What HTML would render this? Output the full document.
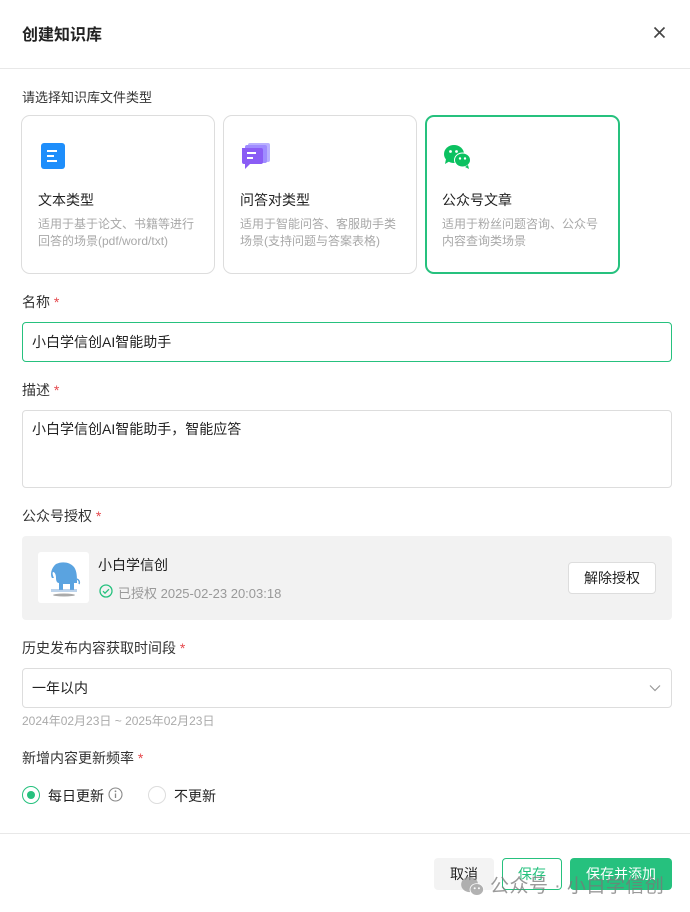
<!DOCTYPE html>
<html><head><meta charset="utf-8"><style>
*{box-sizing:border-box;margin:0;padding:0}
body{width:690px;height:912px;background:#fff;font-family:"Liberation Sans","Noto Sans CJK SC",sans-serif;color:#222;position:relative;overflow:hidden;font-size:14px}
.a{position:absolute;white-space:nowrap}
.lbl{font-size:14px;color:#333}
.lbl b{color:#e5484d;font-weight:normal}
.card{position:absolute;top:115px;height:159px;border:1px solid #ddd;border-radius:9px}
.card .t{position:absolute;left:16px;top:74px;font-size:14px;color:#222}
.card .d{position:absolute;left:16px;top:100px;font-size:12px;line-height:17px;color:#a8a8a8;white-space:normal;width:165px}
.inp{position:absolute;left:22px;width:650px;border:1px solid #ddd;border-radius:4px;font-size:14px;padding-left:9px;color:#222}
.btn{position:absolute;top:858px;height:32px;border-radius:4px;font-size:14px;text-align:center;line-height:32px}
</style></head><body>
<div class="a" style="left:22px;top:21px;font-size:16px;font-weight:bold;color:#222">创建知识库</div>
<svg class="a" style="left:653px;top:26px" width="13" height="13" viewBox="0 0 13 13"><path d="M1.5 1.5L11.5 11.5M11.5 1.5L1.5 11.5" stroke="#444" stroke-width="1.6"/></svg>
<div class="a" style="left:0;top:68px;width:690px;height:1px;background:#e8e8e8"></div>
<div class="a lbl" style="left:22px;top:87px;font-size:13px">请选择知识库文件类型</div>

<div class="card" style="left:21px;width:194px">
<svg class="a" style="left:19px;top:27px" width="24" height="26" viewBox="0 0 24 26"><rect x="0" y="0" width="24" height="26" rx="3" fill="#1e8efb"/><path d="M6 8h10M6 13h7M6 18h10" stroke="#fff" stroke-width="2"/></svg>
<div class="t">文本类型</div><div class="d">适用于基于论文、书籍等进行回答的场景(pdf/word/txt)</div></div>
<div class="card" style="left:223px;width:194px">
<svg class="a" style="left:17px;top:27px" width="30" height="26" viewBox="0 0 30 26"><rect x="7" y="0" width="22" height="19" rx="2" fill="#b9b0ff"/><rect x="4" y="2" width="22" height="18" rx="2" fill="#9f8cff"/><path d="M1 5h19a2 2 0 0 1 2 2v12a2 2 0 0 1-2 2H9l-5 5v-5H3a2 2 0 0 1-2-2z" fill="#8a5cf5"/><path d="M6 10h9M6 15h6" stroke="#fff" stroke-width="2"/></svg>
<div class="t">问答对类型</div><div class="d">适用于智能问答、客服助手类场景(支持问题与答案表格)</div></div>
<div class="card" style="left:425px;width:195px;border:2px solid #26c17e">
<svg class="a" style="left:16px;top:27px" width="30" height="26" viewBox="0 0 30 26"><ellipse cx="11" cy="10" rx="10" ry="9" fill="#0bc160"/><path d="M3 15l-1 5 5-3z" fill="#0bc160"/><ellipse cx="19.5" cy="16" rx="8.5" ry="7.5" fill="#fff"/><ellipse cx="19.5" cy="16" rx="7.5" ry="6.5" fill="#0bc160"/><path d="M25 21l1 4-4-2z" fill="#0bc160"/><circle cx="7.5" cy="7.5" r="1.4" fill="#fff"/><circle cx="13.5" cy="7.5" r="1.4" fill="#fff"/><circle cx="17" cy="14.5" r="1.2" fill="#fff"/><circle cx="22" cy="14.5" r="1.2" fill="#fff"/></svg>
<div class="t" style="left:15px;top:73px">公众号文章</div><div class="d" style="left:15px;top:99px">适用于粉丝问题咨询、公众号内容查询类场景</div></div>

<div class="a lbl" style="left:22px;top:292px">名称 <b>*</b></div>
<div class="inp" style="top:322px;height:40px;line-height:38px;border-color:#26c17e">小白学信创AI智能助手</div>
<div class="a lbl" style="left:22px;top:380px">描述 <b>*</b></div>
<div class="inp" style="top:410px;height:78px;padding-top:8px;line-height:20px">小白学信创AI智能助手，智能应答</div>
<div class="a lbl" style="left:22px;top:506px">公众号授权 <b>*</b></div>
<div class="a" style="left:22px;top:536px;width:650px;height:84px;background:#f2f2f2;border-radius:4px"></div>
<div class="a" style="left:38px;top:552px;width:51px;height:51px;background:#fff;border-radius:3px"></div>
<svg class="a" style="left:44px;top:560px" width="40" height="38" viewBox="0 0 40 38"><path d="M12 4c6-3 14-2 18 3 3 4 3 10 3 16l-3 0 0 7-4 0 0-6-7 0 0 6-4 0 0-7c-2 0-3-2-3-5 0-3-1-6-3-6-1 1 0 4 1 6l-2 0c-2-3-1-10 4-14z" fill="#5aa3e0"/><path d="M33 19c2 1 3 3 2 5" stroke="#5aa3e0" stroke-width="1.5" fill="none"/><rect x="7" y="29" width="26" height="3" fill="#7aa8d8" opacity=".5"/><ellipse cx="20" cy="35" rx="11" ry="1.5" fill="#555" opacity=".5"/></svg>
<div class="a" style="left:98px;top:555px;font-size:14px;color:#222">小白学信创</div>
<svg class="a" style="left:99px;top:584px" width="14" height="14" viewBox="0 0 14 14"><circle cx="7" cy="7" r="6" fill="none" stroke="#26c17e" stroke-width="1.3"/><path d="M4 7.2l2 2 4-4" fill="none" stroke="#26c17e" stroke-width="1.3"/></svg>
<div class="a" style="left:118px;top:583px;font-size:13px;color:#999">已授权 2025-02-23 20:03:18</div>
<div class="a" style="left:568px;top:562px;width:88px;height:32px;background:#fff;border:1px solid #ddd;border-radius:4px;text-align:center;line-height:30px;font-size:14px">解除授权</div>

<div class="a lbl" style="left:22px;top:638px">历史发布内容获取时间段 <b>*</b></div>
<div class="inp" style="top:668px;height:40px;line-height:38px">一年以内</div>
<svg class="a" style="left:649px;top:684px" width="12" height="8" viewBox="0 0 12 8"><path d="M1 1.5l5 5 5-5" fill="none" stroke="#999" stroke-width="1.2"/></svg>
<div class="a" style="left:22px;top:712px;font-size:12px;color:#aaa">2024年02月23日 ~ 2025年02月23日</div>
<div class="a lbl" style="left:22px;top:748px">新增内容更新频率 <b>*</b></div>
<div class="a" style="left:22px;top:786px;width:18px;height:18px;border:1px solid #26c17e;border-radius:50%"></div>
<div class="a" style="left:27px;top:791px;width:8px;height:8px;background:#26c17e;border-radius:50%"></div>
<div class="a" style="left:48px;top:786px;font-size:14px">每日更新</div>
<svg class="a" style="left:108px;top:787px" width="15" height="15" viewBox="0 0 15 15"><circle cx="7.5" cy="7.5" r="6.5" fill="none" stroke="#888" stroke-width="1.1"/><path d="M7.5 6.5v4.5" stroke="#888" stroke-width="1.3"/><circle cx="7.5" cy="4.3" r=".9" fill="#888"/></svg>
<div class="a" style="left:148px;top:786px;width:18px;height:18px;border:1px solid #ddd;border-radius:50%"></div>
<div class="a" style="left:174px;top:786px;font-size:14px">不更新</div>
<div class="a" style="left:0;top:833px;width:690px;height:1px;background:#e8e8e8"></div>

<div class="btn" style="left:434px;width:60px;background:#f3f3f3">取消</div>
<div class="btn" style="left:502px;width:60px;border:1px solid #26c17e;color:#26c17e;line-height:30px">保存</div>
<div class="btn" style="left:570px;width:102px;background:#26c17e;color:#fff">保存并添加</div>
<svg class="a" style="left:459px;top:876px;opacity:.75" width="28" height="22" viewBox="0 0 30 26"><ellipse cx="11" cy="10" rx="10" ry="9" fill="#999"/><ellipse cx="19.5" cy="16" rx="8.5" ry="7.5" fill="#fff"/><ellipse cx="19.5" cy="16" rx="7.5" ry="6.5" fill="#999"/><circle cx="17" cy="14.5" r="1.2" fill="#fff"/><circle cx="22" cy="14.5" r="1.2" fill="#fff"/></svg>
<div class="a" style="left:490px;top:871px;font-size:19px;letter-spacing:0.5px;color:rgba(120,120,120,.75)">公众号 · 小白学信创</div>
</body></html>
